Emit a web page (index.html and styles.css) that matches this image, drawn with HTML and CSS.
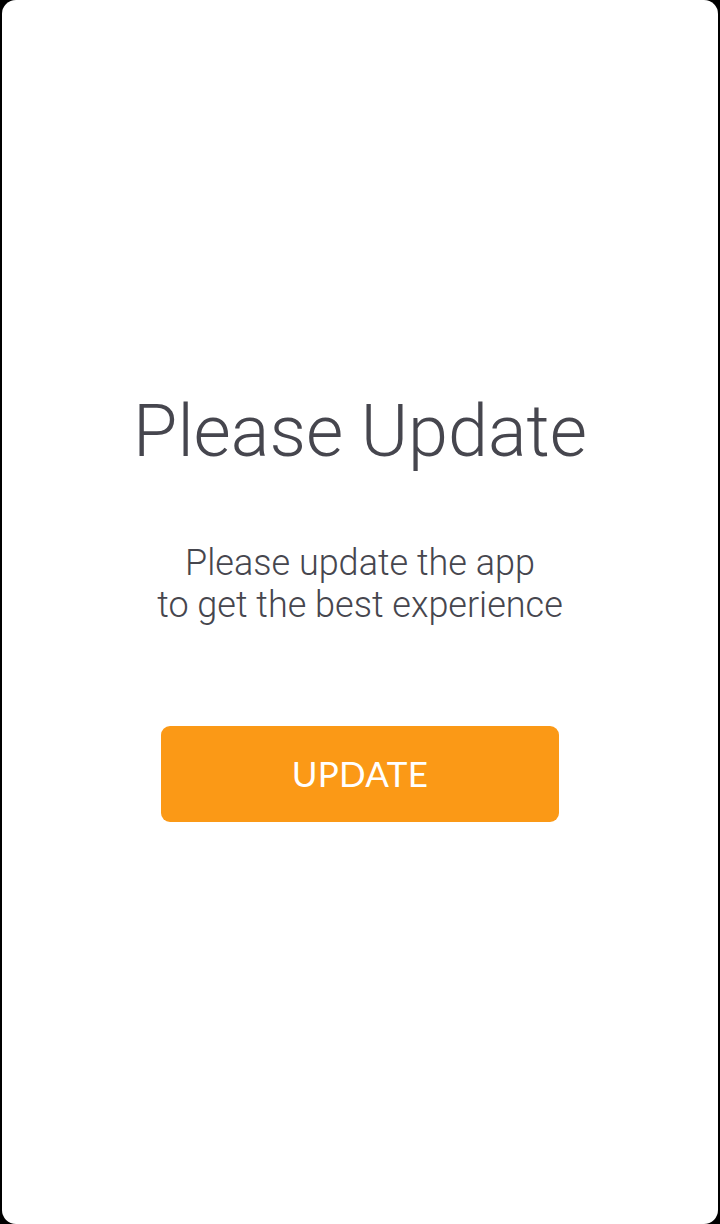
FILE: index.html
```html
<!DOCTYPE html>
<html lang="en">
<head>
<meta charset="utf-8">
<title>Please Update</title>
<link rel="stylesheet" href="styles.css">
</head>
<body>
<main class="card">
  <h1 class="title">Please Update</h1>
  <p class="subtitle">Please update the app<br>to get the best experience</p>
  <button class="update-btn" type="button">UPDATE</button>
</main>
</body>
</html>
```
FILE: styles.css
```css
html, body {
  margin: 0;
  padding: 0;
  background: #000;
}
body {
  width: 720px;
  height: 1224px;
  overflow: hidden;
}
.card {
  box-sizing: border-box;
  margin: 0 2px;
  height: 1224px;
  background: #fff;
  border-radius: 14px;
  display: flex;
  flex-direction: column;
  align-items: center;
  padding-top: 388px;
}
.title {
  margin: 0;
  font-family: Roboto, "Liberation Sans", sans-serif;
  font-weight: 300;
  font-size: 72px;
  line-height: 88px;
  color: #46464e;
  text-align: center;
}
.subtitle {
  margin: 66px 0 0;
  font-family: Roboto, "Liberation Sans", sans-serif;
  font-weight: 300;
  font-size: 36px;
  line-height: 42px;
  color: #46464e;
  text-align: center;
}
.update-btn {
  box-sizing: border-box;
  margin-top: 100px;
  width: 398px;
  height: 96px;
  border: none;
  border-radius: 9px;
  background: #fb9916;
  color: #fff;
  font-family: Lato, "Open Sans", sans-serif;
  font-weight: 400;
  font-size: 35px;
  letter-spacing: 0.3px;
  padding: 0 0 3px;
  display: flex;
  align-items: center;
  justify-content: center;
}
```
